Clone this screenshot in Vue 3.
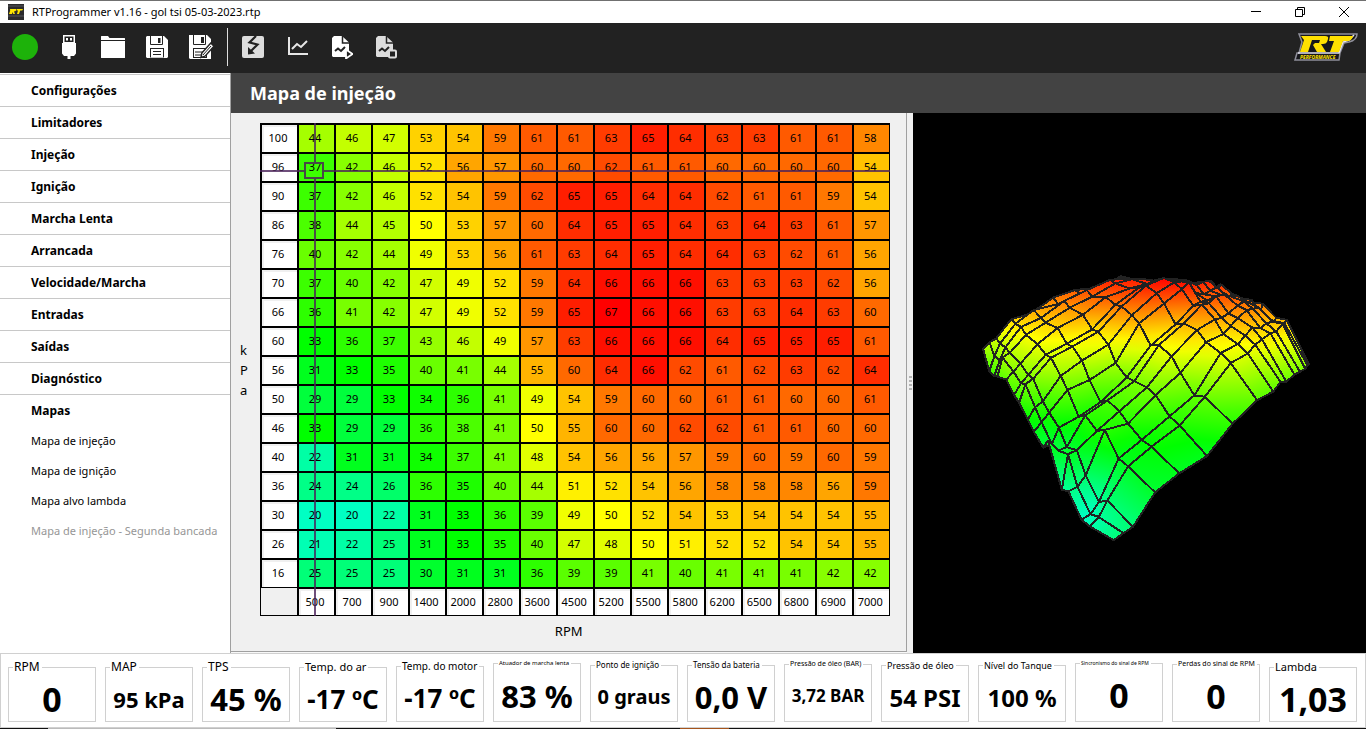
<template>
    <div class="app">
        <header class="titlebar">
            <svg class="app-icon" viewBox="0 0 16 16" aria-hidden="true">
                <rect width="16" height="16" fill="#2b2a2c" />
                <path d="M0 2h16M0 12h16" stroke="#55555a" />
                <path d="M2 5h6.500l-.8 2-1.700.6L7 10H5.300l-.8-2L4 10H1l1.200-3.500zM9 5h6l-.8 1.600h-2L11 10H9l1-3.400H8.500z" fill="#ffe600" />
            </svg>
            <h1>RTProgrammer v1.16 - gol tsi 05-03-2023.rtp</h1>
            <div class="window-buttons">
                <button aria-label="Minimizar">
                    <svg viewBox="0 0 12 12"><path d="M1 5.500h10" /></svg>
                </button>
                <button aria-label="Restaurar">
                    <svg viewBox="0 0 12 12"><path d="M1.500 3.500h7v7h-7zM3.500 3.500v-2h7v7h-2" /></svg>
                </button>
                <button aria-label="Fechar">
                    <svg viewBox="0 0 12 12"><path d="M1 1l10 10M11 1L1 11" /></svg>
                </button>
            </div>
        </header>

        <div class="toolbar">
            <button aria-label="Conectado">
                <svg viewBox="0 0 26 26" class="status"><circle cx="13" cy="13" r="13" fill="#1db20a" /></svg>
            </button>
            <button aria-label="USB">
                <svg viewBox="0 0 24 24">
                    <path fill="#fff" fill-rule="evenodd" d="M6 0h12v8H6zM7.500 1.500V7h9V1.500zM9 3h2v2.500H9zM13 3h2v2.500h-2z" />
                    <path fill="#fff" d="M5 8h14v10.500l-2 2.500h-3.500v3h-3v-3H7l-2-2.500z" />
                </svg>
            </button>
            <button aria-label="Abrir">
                <svg viewBox="0 0 24 24">
                    <path fill="#fff" d="M0 1.500Q0 1 .5 1H7l1.500 2H23.500q.5 0 .5.500V5H0zM0 6h24v16.500q0 .5-.5.500H.5q-.5 0-.5-.5z" />
                </svg>
            </button>
            <button aria-label="Salvar">
                <svg viewBox="0 0 24 24">
                    <path fill="#fff" d="M2 1h17l4 4v17l-1 1H2l-1-1V2z" />
                    <path d="M5.500 1v8.500h12V1" fill="none" stroke="#222" />
                    <path fill="#222" d="M13 3h2.500v5H13zM5 13h14v9.500H5z" />
                    <path fill="#fff" d="M6 14h12v8.500H6z" />
                    <path d="M8 16.500h8M8 19.500h8" stroke="#222" />
                </svg>
            </button>
            <button aria-label="Salvar como">
                <svg viewBox="0 0 26 24" class="wide">
                    <path fill="#fff" d="M1 0h18l4 4v20H2l-1-1z" />
                    <path d="M5.500 0v9.500h12V0" fill="none" stroke="#222" />
                    <path fill="#222" d="M13 2h3v6h-3zM5 13h14v10H5z" />
                    <path fill="#fff" d="M6 14h12v8H6z" />
                    <path d="M7 17h10M7 20h8" stroke="#222" />
                    <path d="M13 22.500l.8-4.500 9-10 3.200 3.200-9 10z" fill="#fff" stroke="#222" stroke-width="1.500" />
                    <path d="M15 20l8-9" stroke="#222" />
                </svg>
            </button>
            <span class="separator"></span>
            <button aria-label="Gravar">
                <svg viewBox="0 0 24 24">
                    <rect x="1" y="1" width="22" height="22" rx="2" fill="#ddd" />
                    <path d="M15 1L8.500 7.500l8 2L9 17" fill="none" stroke="#222" stroke-width="2.200" />
                    <path d="M7 12v7.500l7-1z" fill="#222" />
                </svg>
            </button>
            <button aria-label="Gráfico">
                <svg viewBox="0 0 24 24" fill="none" stroke="#e6e6e6" stroke-width="2">
                    <path d="M4 2v17h19" />
                    <path d="M7 14l5-5 4 3 6-6" />
                </svg>
            </button>
            <button aria-label="Iniciar registro">
                <svg viewBox="0 0 24 24">
                    <path fill="#fff" d="M5 1h8l7 6.500V22H4l-1-1V3z" />
                    <path d="M13.500 1v7H21" fill="none" stroke="#222" stroke-width="1.500" />
                    <path d="M6 16l3-2.500 3 2.500 4-4" fill="none" stroke="#222" stroke-width="2" />
                    <path d="M17 14.500l6.500 4.500-6.500 4.500z" fill="#222" stroke="#fff" stroke-width="1.800" />
                </svg>
            </button>
            <button aria-label="Parar registro">
                <svg viewBox="0 0 24 24">
                    <path fill="#ddd" d="M5 1h8l7 6.500V22H4l-1-1V3z" />
                    <path d="M13.500 1v7H21" fill="none" stroke="#222" stroke-width="1.500" />
                    <path d="M6 16l3-2.500 3 2.500 4-4" fill="none" stroke="#222" stroke-width="2" />
                    <rect x="16" y="15.500" width="7" height="7" rx="1" fill="#222" stroke="#ddd" stroke-width="2" />
                </svg>
            </button>
            <svg class="logo" viewBox="0 0 64 28" role="img" aria-label="RT Performance">
                <path d="M5 1h58q0 6-8 8l-5 1-4 10-1 7H1l2-7h2l3-11z" fill="#17171c" stroke="#8f8f9a" stroke-width="1.500" />
                <path d="M4 20h41l4-11 6-2 5-5" fill="none" stroke="#e4e4ee" stroke-width="1.500" />
                <path d="M7 3h24q4 0 3 3l-1 3q-1 2-4 2h-2l5 8h-9l-4-7 2-2h4l1-3h-8l-4 12H6l4-12z" fill="#ffe000" />
                <path d="M36 3h23q-1 5-6 5h-4l-4 11h-9l4-11h-5z" fill="#ffe000" />
                <text x="6" y="26">PERFORMANCE</text>
            </svg>
        </div>

        <main>
            <nav class="sidebar">
                <button v-for="s in sections" :key="s" class="section">{{ s }}</button>
                <button v-for="m in maps" :key="m.name" class="map" :disabled="m.disabled">{{ m.name }}</button>
            </nav>

            <section class="content">
                <h2>{{ maps[0].name }}</h2>
                <div class="panes">
                    <div class="table-pane">
                        <div class="table-row">
                            <div class="y-label"><span>k</span><span>P</span><span>a</span></div>
                            <div class="table-wrap">
                                <table>
                                    <tbody>
                                        <tr v-for="(row, i) in values" :key="i">
                                            <th scope="row">{{ kpa[i] }}</th>
                                            <td v-for="(v, j) in row" :key="j" :style="{ backgroundColor: color(v) }">{{ v }}</td>
                                        </tr>
                                        <tr>
                                            <td class="corner"></td>
                                            <th v-for="r in rpm" :key="r" scope="col">{{ r }}</th>
                                        </tr>
                                    </tbody>
                                </table>
                                <div class="cross-v"></div>
                                <div class="cross-h"></div>
                                <div class="cross-box"></div>
                            </div>
                        </div>
                        <div class="x-label">RPM</div>
                    </div>
                    <div class="splitter"><i></i><i></i><i></i><i></i></div>
                    <div class="view3d">
                        <svg viewBox="913 113 453 540" role="img" aria-label="Superfície 3D">
                            <defs>
                                <linearGradient v-for="q in quads" :id="q.id" :key="q.id" gradientUnits="userSpaceOnUse"
                                    :x1="q.x1" :y1="q.y1" :x2="q.x2" :y2="q.y2">
                                    <stop v-for="s in q.stops" :key="s.offset" :offset="s.offset" :stop-color="s.color" />
                                </linearGradient>
                            </defs>
                            <polygon v-for="q in quads" :key="q.id" class="quad" :points="q.points" :fill="`url(#${q.id})`" />
                        </svg>
                    </div>
                </div>
            </section>
        </main>

        <footer class="gauges">
            <fieldset v-for="g in gauges" :key="g.label">
                <legend :class="'l' + g.ls">{{ g.label }}</legend>
                <output :class="'v' + g.vs">{{ g.value }}</output>
            </fieldset>
        </footer>
        <div class="taskbar"></div>
    </div>
</template>

<script setup>
const sections = ['Configurações', 'Limitadores', 'Injeção', 'Ignição', 'Marcha Lenta', 'Arrancada',
    'Velocidade/Marcha', 'Entradas', 'Saídas', 'Diagnóstico', 'Mapas']

const maps = [
    { name: 'Mapa de injeção' },
    { name: 'Mapa de ignição' },
    { name: 'Mapa alvo lambda' },
    { name: 'Mapa de injeção - Segunda bancada', disabled: true },
]

const rpm = [500, 700, 900, 1400, 2000, 2800, 3600, 4500, 5200, 5500, 5800, 6200, 6500, 6800, 6900, 7000]
const kpa = [100, 96, 90, 86, 76, 70, 66, 60, 56, 50, 46, 40, 36, 30, 26, 16]

const values = [
    [44, 46, 47, 53, 54, 59, 61, 61, 63, 65, 64, 63, 63, 61, 61, 58],
    [37, 42, 46, 52, 56, 57, 60, 60, 62, 61, 61, 60, 60, 60, 60, 54],
    [37, 42, 46, 52, 54, 59, 62, 65, 65, 64, 64, 62, 61, 61, 59, 54],
    [38, 44, 45, 50, 53, 57, 60, 64, 65, 65, 64, 63, 64, 63, 61, 57],
    [40, 42, 44, 49, 53, 56, 61, 63, 64, 65, 64, 64, 63, 62, 61, 56],
    [37, 40, 42, 47, 49, 52, 59, 64, 66, 66, 66, 63, 63, 63, 62, 56],
    [36, 41, 42, 47, 49, 52, 59, 65, 67, 66, 66, 63, 63, 64, 63, 60],
    [33, 36, 37, 43, 46, 49, 57, 63, 66, 66, 66, 64, 65, 65, 65, 61],
    [31, 33, 35, 40, 41, 44, 55, 60, 64, 66, 62, 61, 62, 63, 62, 64],
    [29, 29, 33, 34, 36, 41, 49, 54, 59, 60, 60, 61, 61, 60, 60, 61],
    [33, 29, 29, 36, 38, 41, 50, 55, 60, 60, 62, 62, 61, 61, 60, 60],
    [22, 31, 31, 34, 37, 41, 48, 54, 56, 56, 57, 59, 60, 59, 60, 59],
    [24, 24, 26, 36, 35, 40, 44, 51, 52, 54, 56, 58, 58, 58, 56, 59],
    [20, 20, 22, 31, 33, 36, 39, 49, 50, 52, 54, 53, 54, 54, 54, 55],
    [21, 22, 25, 31, 33, 35, 40, 47, 48, 50, 51, 52, 52, 54, 54, 55],
    [25, 25, 25, 30, 31, 31, 36, 39, 39, 41, 40, 41, 41, 41, 42, 42],
]

// 67 = vermelho, 50 = amarelo, 33 = verde, abaixo disso vai para ciano
const color = (v) => {
    const t = Math.round((Math.min(v, 67) - 50) * 15)
    if (t >= 0) return `rgb(255, ${255 - t}, 0)`
    if (t >= -255) return `rgb(${255 + t}, 255, 0)`
    return `rgb(0, 255, ${-255 - t})`
}

// projeção em perspectiva da câmera do gráfico 3D
const project = (r, k, v) => {
    const x = (r - 500) / 6500
    const y = (k - 16) / 84
    const z = (v - 20) / 47
    const w = 0.734 * x + 0.8653 * y - 0.2127 * z + 1
    return {
        x: 1140 + 100 * (3.034 * x - 2.4886 * y - 0.0228 * z - 0.2539) / w,
        y: 400 + 100 * (-1.1702 * x - 1.3855 * y - 2.1677 * z + 1.6007) / w,
        w,
        v,
    }
}

// gradiente linear que melhor segue os quatro valores do quadrado
const gradient = (c) => {
    const mx = c.reduce((s, p) => s + p.x, 0) / 4
    const my = c.reduce((s, p) => s + p.y, 0) / 4
    const mv = c.reduce((s, p) => s + p.v, 0) / 4
    let xx = 4, xy = 0, yy = 4, xv = 0, yv = 0
    for (const p of c) {
        const dx = p.x - mx, dy = p.y - my, dv = p.v - mv
        xx += dx * dx
        xy += dx * dy
        yy += dy * dy
        xv += dx * dv
        yv += dy * dv
    }
    const det = xx * yy - xy * xy
    const gx = (xv * yy - yv * xy) / det
    const gy = (yv * xx - xv * xy) / det
    const g2 = gx * gx + gy * gy + 0.0001
    const lo = Math.min(...c.map(p => p.v))
    const hi = Math.max(...c.map(p => p.v)) + 0.01
    const at = (v) => [mx + gx * (v - mv) / g2, my + gy * (v - mv) / g2]
    const [x1, y1] = at(lo)
    const [x2, y2] = at(hi)
    const stops = [0, 0.25, 0.5, 0.75, 1].map(o => ({ offset: o, color: color(lo + (hi - lo) * o) }))
    return { x1, y1, x2, y2, stops }
}

const quads = []
for (let i = 0; i < kpa.length - 1; i++) {
    for (let j = 0; j < rpm.length - 1; j++) {
        const c = [[i, j], [i, j + 1], [i + 1, j + 1], [i + 1, j]].map(([a, b]) => project(rpm[b], kpa[a], values[a][b]))
        quads.push({
            id: `q${i}-${j}`,
            depth: c.reduce((s, p) => s + p.w, 0),
            points: c.map(p => `${p.x.toFixed(1)},${p.y.toFixed(1)}`).join(' '),
            ...gradient(c),
        })
    }
}
// os mais distantes primeiro
quads.sort((a, b) => b.depth - a.depth)

// ls / vs: tamanho do título e do valor
const gauges = [
    { label: 'RPM', value: '0', ls: 12, vs: 34 },
    { label: 'MAP', value: '95 kPa', ls: 12, vs: 22 },
    { label: 'TPS', value: '45 %', ls: 12, vs: 31 },
    { label: 'Temp. do ar', value: '-17 ºC', ls: 11, vs: 26 },
    { label: 'Temp. do motor', value: '-17 ºC', ls: 10, vs: 26 },
    { label: 'Atuador de marcha lenta', value: '83 %', ls: 6, vs: 31 },
    { label: 'Ponto de ignição', value: '0 graus', ls: 8, vs: 20 },
    { label: 'Tensão da bateria', value: '0,0 V', ls: 8, vs: 31 },
    { label: 'Pressão de óleo (BAR)', value: '3,72 BAR', ls: 7, vs: 17 },
    { label: 'Pressão de óleo', value: '54 PSI', ls: 9, vs: 24 },
    { label: 'Nível do Tanque', value: '100 %', ls: 9, vs: 24 },
    { label: 'Sincronismo do sinal de RPM', value: '0', ls: 5, vs: 34 },
    { label: 'Perdas do sinal de RPM', value: '0', ls: 7, vs: 34 },
    { label: 'Lambda', value: '1,03', ls: 11, vs: 34 },
]
</script>

<style>
body {
    margin: 0;
    background: #fff;
}
</style>

<style scoped>
.app {
    display: flex;
    flex-direction: column;
    min-height: 100vh;
    font: 12px/16px "Noto Sans", "Open Sans", sans-serif;
    color: #000;
}

button {
    border: 0;
    padding: 0;
    margin: 0;
    background: none;
    font: inherit;
    color: inherit;
}

.titlebar {
    display: flex;
    align-items: center;
    height: 22px;
    border-top: 1px solid #707070;
    padding-left: 8px;
    background: #fff;
}

.app-icon {
    width: 16px;
    height: 16px;
}

h1 {
    flex: 1;
    margin: 0 0 0 8px;
    font-size: 11px;
    font-weight: 400;
}

.window-buttons {
    display: flex;
}

.window-buttons button {
    display: flex;
    align-items: center;
    justify-content: center;
    width: 44px;
    height: 22px;
}

.window-buttons svg {
    width: 12px;
    height: 12px;
    fill: none;
    stroke: #000;
}

.toolbar {
    display: flex;
    align-items: center;
    gap: 16px;
    box-sizing: border-box;
    height: 50px;
    padding: 0 8px 2px 11px;
    background: #222;
}

.toolbar button {
    display: flex;
    align-items: center;
    justify-content: center;
    width: 28px;
    height: 28px;
}

.toolbar button svg {
    width: 24px;
    height: 24px;
}

.toolbar button .status,
.toolbar button .wide {
    width: 26px;
}

.toolbar button .status {
    height: 26px;
}

.separator {
    width: 1px;
    height: 38px;
    margin: 0 -5px 0 -4px;
    background: #ddd;
}

.logo {
    width: 64px;
    height: 28px;
    margin-left: auto;
}

.logo text {
    font: italic 700 5px "Noto Sans", sans-serif;
    fill: #ffe000;
}

main {
    display: flex;
    flex: 1;
}

.sidebar {
    display: flex;
    flex-direction: column;
    box-sizing: border-box;
    width: 231px;
    padding-top: 1px;
    border-right: 1px solid #a0a0a0;
    background: #fff;
}

.sidebar button {
    height: 30px;
    padding-left: 31px;
    text-align: left;
    white-space: nowrap;
}

.sidebar .section {
    height: 32px;
    border-top: 1px solid #c8c8c8;
    font-weight: 700;
}

.sidebar .map {
    font-size: 11px;
}

.sidebar .map:disabled {
    color: #969696;
}

.content {
    display: flex;
    flex-direction: column;
    flex: 1;
    min-width: 0;
}

h2 {
    margin: 0;
    padding-left: 19px;
    background: #434343;
    color: #fff;
    font-size: 18px;
    line-height: 40px;
}

.panes {
    display: flex;
    flex: 1;
    background: #f8f8f8;
}

.table-pane {
    flex: 676 1 0;
    min-width: 0;
    margin-bottom: 1px;
    border: solid #a0a0a0;
    border-width: 0 1px 1px 0;
    background: #f0f0f0;
}

.table-row {
    display: flex;
    padding: 10px 16px 0 9px;
}

.y-label {
    display: flex;
    flex-direction: column;
    justify-content: center;
    width: 20px;
    font-size: 13px;
    line-height: 20px;
}

.table-wrap {
    position: relative;
    flex: 1;
}

table {
    width: 100%;
    table-layout: fixed;
    border-collapse: separate;
    border-spacing: 0;
    border: solid #000;
    border-width: 0 1px 1px 0;
    background: #000;
    text-align: center;
    font-size: 11px;
}

tr {
    height: 29px;
}

tr:last-child {
    height: 28px;
}

td,
th {
    box-sizing: border-box;
    padding: 0 3px 2px 0;
    border: solid #000;
    border-width: 2px 0 0 2px;
    font-weight: 400;
    line-height: 16px;
}

th {
    background: #fff;
    box-shadow: inset 1px 1px 0 1px #f0f0f0;
}

th[scope="col"] {
    padding: 0 3px 0 0;
}

.corner {
    border-width: 1px 0 0 1px;
    background: #f0f0f0;
}

.cross-v,
.cross-h {
    --line: rgba(75, 35, 90, 0.8);
    position: absolute;
}

/* as linhas não passam por dentro do marcador */
.cross-v {
    left: 8.6%;
    top: 0;
    bottom: 0;
    width: 2px;
    background: linear-gradient(var(--line) 8%, transparent 8% 11.4%, var(--line) 11.4%);
}

.cross-h {
    top: 9.6%;
    left: 0;
    right: 0;
    height: 2px;
    background: linear-gradient(90deg, var(--line) 7%, transparent 7% 10.1%, var(--line) 10.1%);
}

.cross-box {
    position: absolute;
    left: 7%;
    top: 8%;
    box-sizing: border-box;
    width: 20px;
    height: 17px;
    border: 2px solid #484848;
}

.x-label {
    margin-top: 5px;
    font-size: 13px;
    line-height: 20px;
    text-align: center;
}

.splitter {
    display: flex;
    flex-direction: column;
    align-items: center;
    justify-content: center;
    gap: 2px;
    width: 6px;
    background: #f0f0f0;
}

.splitter i {
    width: 3px;
    height: 2px;
    background: #b4b4b4;
}

.view3d {
    flex: 453 1 0;
    min-width: 0;
    background: #000;
}

.view3d svg {
    display: block;
    width: 100%;
    height: 100%;
}

.quad {
    stroke: #222;
    stroke-width: 2;
    stroke-linejoin: round;
    shape-rendering: crispEdges;
}

.gauges {
    display: grid;
    grid-template-columns: repeat(14, minmax(0, 1fr));
    gap: 9px;
    padding: 5px 8px 5px 7px;
    border: 1px solid #d0d0d0;
    background: #fff;
}

fieldset {
    display: flex;
    align-items: center;
    justify-content: center;
    min-width: 0;
    height: 63px;
    box-sizing: border-box;
    margin: 0;
    padding: 2px 0 0;
    border: 1px solid #d0d0d0;
}

legend {
    margin-left: 4px;
    padding: 0 2px 0 1px;
    line-height: 16px;
    white-space: nowrap;
}

output {
    font-weight: 700;
    line-height: 40px;
    white-space: nowrap;
}

.l11 { font-size: 11px; }
.l10 { font-size: 10px; line-height: 14px; }
.l9 { font-size: 9px; line-height: 13px; }
.l8 { font-size: 8px; line-height: 12px; }
.l7 { font-size: 7px; line-height: 10px; }
.l6 { font-size: 6px; line-height: 9px; }
.l5 { font-size: 5px; line-height: 8px; }

.v34 { font-size: 34px; }
.v31 { font-size: 31px; }
.v26 { font-size: 26px; }
.v24 { font-size: 24px; }
.v22 { font-size: 22px; }
.v20 { font-size: 20px; }
.v17 { font-size: 17px; }

.taskbar {
    height: 1px;
    background: linear-gradient(90deg, #111 3.5%, #bbb 3.5% 24.6%, #111 24.6% 49.8%, #a5541c 49.8% 53.4%, #111 53.4%);
}
</style>
